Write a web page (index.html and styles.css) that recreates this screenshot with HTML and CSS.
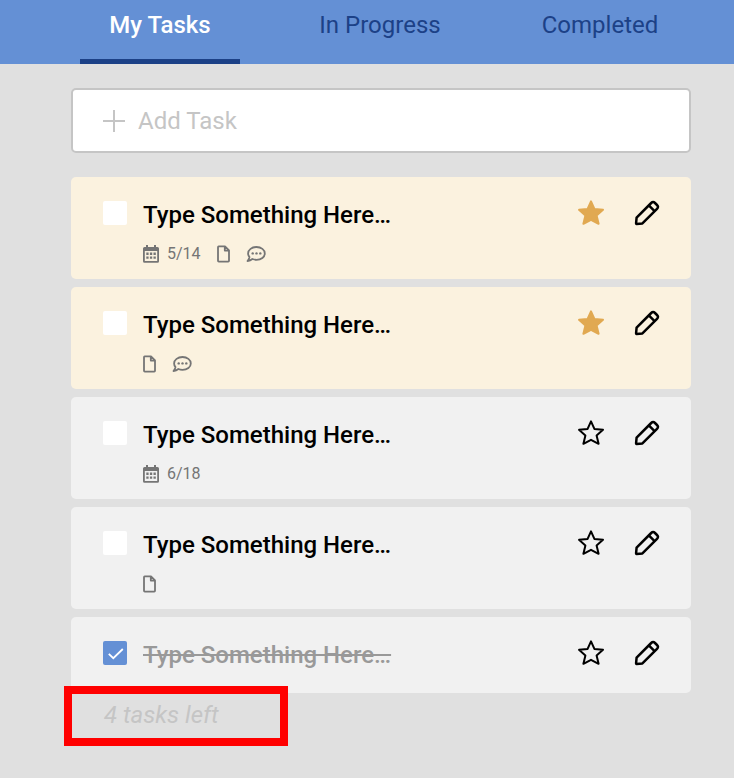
FILE: index.html
```html
<!DOCTYPE html>
<html lang="en">
<head>
<meta charset="utf-8">
<meta name="viewport" content="width=device-width, initial-scale=1">
<title>My Tasks</title>
<link rel="stylesheet" href="styles.css">
</head>
<body>
<svg class="sprite" aria-hidden="true">
  <symbol id="star" viewBox="0 0 28 28"><path d="M14 2.4 L17.4 9.9 L26 10.8 L19.6 16.4 L21.6 24.8 L14 20.8 L6.4 24.8 L8.4 16.4 L2 10.8 L10.6 9.9 Z" stroke-width="2" stroke-linejoin="round"/></symbol>
  <symbol id="pencil" viewBox="0 0 28 28"><path d="M3.1 23.9 L3.6 18.6 L18.2 4 Q20.1 2.1 22 4 L24 6 Q25.9 7.9 24 9.8 L9.4 24.4 L3.6 24.9 Q3 24.9 3.1 23.9 Z M15.8 6.4 L21.6 12.2" fill="none" stroke="currentColor" stroke-width="2.5" stroke-linejoin="round"/></symbol>
  <symbol id="calendar" viewBox="0 0 16 18"><path fill-rule="evenodd" d="M3 0 H5 V2 H11 V0 H13 V2 H14.5 Q16 2 16 3.5 V16.3 Q16 17.8 14.5 17.8 H1.5 Q0 17.8 0 16.3 V3.5 Q0 2 1.5 2 H3 Z M1.8 6 V16 H14.2 V6 Z"/><path d="M3.3 7.6h2.3v2.3h-2.3z M6.9 7.6h2.3v2.3H6.9z M10.5 7.6h2.3v2.3h-2.3z M3.3 11.4h2.3v2.3h-2.3z M6.9 11.4h2.3v2.3H6.9z M10.5 11.4h2.3v2.3h-2.3z"/></symbol>
  <symbol id="file" viewBox="0 0 13 18"><path d="M1.6 1.4 H8 L12 5.4 V15.8 Q12 16.6 11.2 16.6 H1.8 Q1 16.6 1 15.8 V2.2 Q1 1.4 1.6 1.4 Z M7.8 1.4 V5.6 H12" fill="none" stroke="currentColor" stroke-width="1.8" stroke-linejoin="round"/></symbol>
  <symbol id="comment" viewBox="0 0 20 18"><path d="M10.5 2 C15.2 2 18.8 4.8 18.8 8.4 C18.8 12 15.2 14.8 10.5 14.8 Q8.3 14.8 6.4 14 Q4.3 15.9 1.5 16 Q3 14.3 3.5 12.1 Q2.1 10.4 2.1 8.4 C2.1 4.8 5.8 2 10.5 2 Z" fill="none" stroke="currentColor" stroke-width="1.8" stroke-linejoin="round"/><circle cx="6.7" cy="8.4" r="1.2"/><circle cx="10.5" cy="8.4" r="1.2"/><circle cx="14.3" cy="8.4" r="1.2"/></symbol>
  <symbol id="check" viewBox="0 0 24 24"><path d="M5.8 12.8 L10.3 17.2 L19.8 8" fill="none" stroke="currentColor" stroke-width="1.8"/></symbol>
</svg>

<header class="header">
  <nav class="tabs">
    <a class="tab tab-active" href="#my-tasks" aria-current="page">My Tasks</a>
    <a class="tab" href="#in-progress">In Progress</a>
    <a class="tab" href="#completed">Completed</a>
  </nav>
</header>

<main class="content">
  <label class="add-task">
    <svg class="plus" viewBox="0 0 22 22" aria-hidden="true"><path d="M11 0 V22 M0 11 H22" stroke="currentColor" stroke-width="2"/></svg>
    <input class="add-input" type="text" placeholder="Add Task" aria-label="Add Task">
  </label>

  <ul class="tasks">
    <li class="task task-starred">
      <div class="row">
        <span class="box"><input type="checkbox" id="task-1"><svg class="tick"><use href="#check"/></svg></span>
        <label class="title" for="task-1">Type Something Here…</label>
        <button class="action star" type="button" aria-label="Star"><svg><use href="#star"/></svg></button>
        <button class="action" type="button" aria-label="Edit"><svg><use href="#pencil"/></svg></button>
      </div>
      <div class="meta">
        <span class="date"><svg class="i-calendar"><use href="#calendar"/></svg>5/14</span>
        <svg class="i-file"><use href="#file"/></svg>
        <svg class="i-comment"><use href="#comment"/></svg>
      </div>
    </li>
    <li class="task task-starred">
      <div class="row">
        <span class="box"><input type="checkbox" id="task-2"><svg class="tick"><use href="#check"/></svg></span>
        <label class="title" for="task-2">Type Something Here…</label>
        <button class="action star" type="button" aria-label="Star"><svg><use href="#star"/></svg></button>
        <button class="action" type="button" aria-label="Edit"><svg><use href="#pencil"/></svg></button>
      </div>
      <div class="meta">
        <svg class="i-file"><use href="#file"/></svg>
        <svg class="i-comment"><use href="#comment"/></svg>
      </div>
    </li>
    <li class="task">
      <div class="row">
        <span class="box"><input type="checkbox" id="task-3"><svg class="tick"><use href="#check"/></svg></span>
        <label class="title" for="task-3">Type Something Here…</label>
        <button class="action star" type="button" aria-label="Star"><svg><use href="#star"/></svg></button>
        <button class="action" type="button" aria-label="Edit"><svg><use href="#pencil"/></svg></button>
      </div>
      <div class="meta">
        <span class="date"><svg class="i-calendar"><use href="#calendar"/></svg>6/18</span>
      </div>
    </li>
    <li class="task">
      <div class="row">
        <span class="box"><input type="checkbox" id="task-4"><svg class="tick"><use href="#check"/></svg></span>
        <label class="title" for="task-4">Type Something Here…</label>
        <button class="action star" type="button" aria-label="Star"><svg><use href="#star"/></svg></button>
        <button class="action" type="button" aria-label="Edit"><svg><use href="#pencil"/></svg></button>
      </div>
      <div class="meta">
        <svg class="i-file"><use href="#file"/></svg>
      </div>
    </li>
    <li class="task task-done">
      <div class="row">
        <span class="box"><input type="checkbox" id="task-5" checked><svg class="tick"><use href="#check"/></svg></span>
        <label class="title" for="task-5">Type Something Here…</label>
        <button class="action star" type="button" aria-label="Star"><svg><use href="#star"/></svg></button>
        <button class="action" type="button" aria-label="Edit"><svg><use href="#pencil"/></svg></button>
      </div>
    </li>
  </ul>

  <p class="remaining">4 tasks left</p>
</main>
</body>
</html>
```
FILE: styles.css
```css
* {
  box-sizing: border-box;
}

body {
  margin: 0;
  background: #e0e0e0;
  color: #000;
  font-family: Roboto, "Liberation Sans", sans-serif;
  font-size: 24px;
  line-height: 28px;
}

.sprite {
  display: none;
}

svg {
  display: block;
  fill: currentColor;
}

.header {
  padding: 0 54px 0 80px;
  background: #6490d5;
}

.tabs {
  display: grid;
  grid-template-columns: repeat(3, 1fr);
  gap: 60px;
}

.tab {
  height: 64px;
  padding-top: 11px;
  border-bottom: 5px solid transparent;
  color: #1c4187;
  text-align: center;
  text-decoration: none;
  white-space: nowrap;
}

.tab-active {
  border-bottom-color: #1c4187;
  color: #fff;
  font-weight: 500;
}

.content {
  padding: 24px 43px 32px 71px;
}

.add-task {
  display: flex;
  align-items: center;
  gap: 13px;
  padding: 16px 30px;
  border: 2px solid #c5c5c5;
  border-radius: 5px;
  background: #fff;
  color: #c5c5c5;
}

.plus {
  flex: none;
  width: 22px;
  height: 22px;
}

.add-input {
  flex: 1;
  min-width: 0;
  height: 29px;
  padding: 0;
  border: 0;
  outline: 0;
  background: none;
  color: #000;
  font: inherit;
}

.add-input::placeholder {
  color: #c5c5c5;
  opacity: 1;
}

.tasks {
  display: grid;
  gap: 8px;
  margin: 24px 0 0;
  padding: 0;
  list-style: none;
}

.task {
  padding: 22px 30px 12px 32px;
  border-radius: 5px;
  background: #f1f1f1;
}

.task-starred {
  background: #fbf2df;
}

.row {
  display: flex;
  align-items: center;
  height: 28px;
}

.box {
  display: grid;
  margin-right: 16px;
}

.box > * {
  grid-area: 1 / 1;
  width: 24px;
  height: 24px;
}

.box input {
  margin: 0;
  border-radius: 2px;
  background: #fff;
  appearance: none;
}

.box input:checked {
  background: #6490d5;
}

.tick {
  color: #fff;
  pointer-events: none;
  visibility: hidden;
}

.box input:checked + .tick {
  visibility: visible;
}

.title {
  flex: 1;
  padding-top: 3px;
  font-weight: 500;
}

.action {
  margin-left: 28px;
  padding: 0;
  border: 0;
  background: none;
  color: #000;
}

.action svg {
  width: 28px;
  height: 28px;
}

.star svg {
  fill: none;
  stroke: #000;
}

.task-starred .star svg {
  fill: #e1a951;
  stroke: #e1a951;
}

.meta {
  display: flex;
  align-items: center;
  gap: 16px;
  height: 26px;
  margin: 14px 0 0 40px;
  color: #757575;
  font-size: 16px;
  line-height: 24px;
}

.date {
  display: flex;
  align-items: center;
  gap: 8px;
}

.i-calendar {
  width: 16px;
  height: 18px;
}

.i-file {
  width: 13px;
  height: 18px;
}

.i-comment {
  width: 20px;
  height: 18px;
}

.task-done {
  padding-bottom: 26px;
}

.task-done .title {
  color: #999;
  text-decoration: line-through;
}

.remaining {
  position: relative;
  width: 224px;
  margin: -7px 0 0 -7px;
  padding: 7px 32px 9px;
  border: 8px solid #f00;
  color: #c5c5c5;
  font-style: italic;
}
```
